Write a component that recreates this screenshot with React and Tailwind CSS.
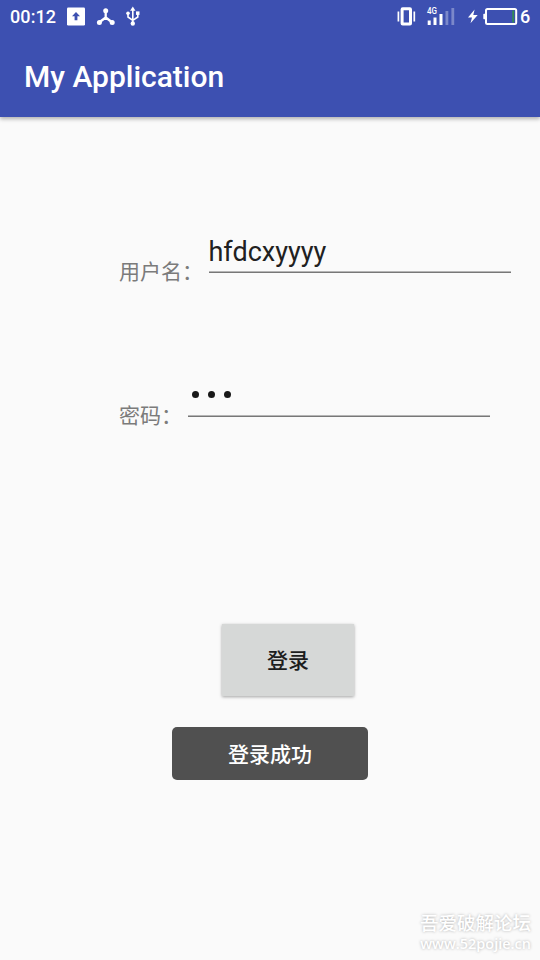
const cjk = "font-['Roboto','Noto_Sans_CJK_SC',sans-serif]";

function StatusBar() {
  return (
    <div className="flex h-[33px] items-center text-white">
      <span className="ml-[10px] w-[57px] whitespace-nowrap text-[18px] font-medium leading-[33px] tracking-[0.1px]">00:12</span>
      <svg className="h-[33px] w-[80px]" viewBox="67 0 80 33" fill="none">
        <rect x="67" y="7.5" width="18" height="18" rx="1.2" fill="#fff" />
        <path d="M76 12l-4 4.3h2.6v4h2.8v-4H80z" fill="#3d50b1" />
        <path d="M105.7 11v6.5M105.7 17.5l-6 4.5M105.7 17.5l6 4.5" stroke="#fff" strokeWidth="2.3" strokeLinecap="round" />
        <g fill="#fff">
          <circle cx="105.7" cy="10.7" r="2.5" />
          <circle cx="99.4" cy="22.6" r="2.5" />
          <circle cx="112.2" cy="22.6" r="2.5" />
          <path d="M132.8 6.5l-2.7 4.2h5.4z" />
          <circle cx="132.8" cy="23.5" r="2.2" />
          <circle cx="128" cy="13.2" r="1.8" />
          <rect x="136" y="11.4" width="3.5" height="3.5" />
        </g>
        <path d="M132.8 9v14M128 13v4l4.8 3.3M137.8 13v4l-5 3.3" stroke="#fff" strokeWidth="1.6" />
      </svg>
      <svg className="ml-auto h-[33px] w-[121px]" viewBox="397 0 121 33" fill="none">
        <rect x="402.1" y="8.8" width="8.4" height="15.2" rx="0.6" stroke="#fff" strokeWidth="3" />
        <path d="M398.4 11.5v10M414.3 11.5v10" stroke="#fff" strokeWidth="1.7" />
        <text x="427" y="14" fill="#fff" fontSize="8.5" fontWeight="500" textLength="10" lengthAdjust="spacingAndGlyphs">4G</text>
        <g fill="#fff">
          <rect x="427.7" y="20.5" width="3" height="4.5" />
          <rect x="433.5" y="17.5" width="3" height="7.5" />
          <rect x="439.5" y="14" width="3" height="11" />
          <rect x="445.5" y="11" width="2.8" height="14" opacity=".32" />
          <rect x="451.4" y="8" width="2.8" height="17" opacity=".32" />
          <path d="M474.6 9.6l-6.6 8h4l-1.5 5.7 7.2-8.3h-4.4z" />
          <rect x="483.3" y="13.8" width="2.4" height="5.4" rx=".7" />
        </g>
        <rect x="486" y="9" width="30.2" height="15" rx="1.5" stroke="#fff" strokeWidth="2" />
        <rect x="512.3" y="10.5" width="1.8" height="12" fill="#328c52" />
      </svg>
      <span className="ml-[2px] mr-[10px] w-[10px] text-[18px] font-medium leading-[33px]">6</span>
    </div>
  );
}

function Field({ label, children }) {
  return (
    <div className="ml-[119px] flex h-[60px] items-start">
      <label className={`${cjk} mt-[29px] whitespace-nowrap text-[21px] leading-[30px] text-[#7b7b7b]`}>{label}</label>
      <div className="ml-[5.5px] w-[302px]">
        <div className="h-[43px]">{children}</div>
        <div className="h-px bg-[#b5b5b5]" />
        <div className="h-px bg-[#777777]" />
      </div>
    </div>
  );
}

export default function App() {
  return (
    <div className="relative flex h-[960px] w-[540px] flex-col overflow-hidden bg-[#fafafa] font-[Roboto,sans-serif]">
      <header className="h-[117px] shrink-0 bg-[#3d50b1] shadow-[0_2px_4px_rgba(0,0,0,0.3)]">
        <StatusBar />
        <h1 className="pl-[24px] pt-[24px] text-[30px] font-medium leading-[40px] text-white">My Application</h1>
      </header>

      <main className="flex flex-col">
        <div className="mt-[111px]">
          <Field label="用户名：">
            <div className="pt-[6px] text-[27px] leading-[36px] text-[#212121]">hfdcxyyyy</div>
          </Field>
        </div>
        <div className="mt-[84px]">
          <Field label="密码：">
            <div className="flex gap-[9.5px] pl-[4.5px] pt-[19px]">
              <span className="h-[7px] w-[6.5px] rounded-full bg-[#181818]" />
              <span className="h-[7px] w-[6.5px] rounded-full bg-[#181818]" />
              <span className="h-[7px] w-[6.5px] rounded-full bg-[#181818]" />
            </div>
          </Field>
        </div>
        <button className={`${cjk} ml-[222px] mt-[192px] h-[72px] w-[132px] bg-[#d6d8d7] pt-[2px] text-[21px] font-medium leading-[30px] text-[#1c1d1d] shadow-[0_1px_3px_rgba(0,0,0,0.35)]`}>登录</button>
        <div className={`${cjk} ml-[172px] mt-[31px] flex h-[53px] w-[196px] items-center justify-center rounded-[5px] bg-[#505050] pt-[2px] text-[21px] font-medium leading-[30px] text-white`}>登录成功</div>
      </main>

      <div className="absolute bottom-[7px] right-[9px] flex flex-col items-end whitespace-nowrap text-white [text-shadow:0_0_3px_rgba(0,0,0,0.3)]">
        <span className={`${cjk} text-[18.5px] font-medium leading-[22px]`}>吾爱破解论坛</span>
        <span className="font-['Open_Sans',sans-serif] text-[14.5px] font-semibold leading-[18px]">www.52pojie.cn</span>
      </div>
    </div>
  );
}
